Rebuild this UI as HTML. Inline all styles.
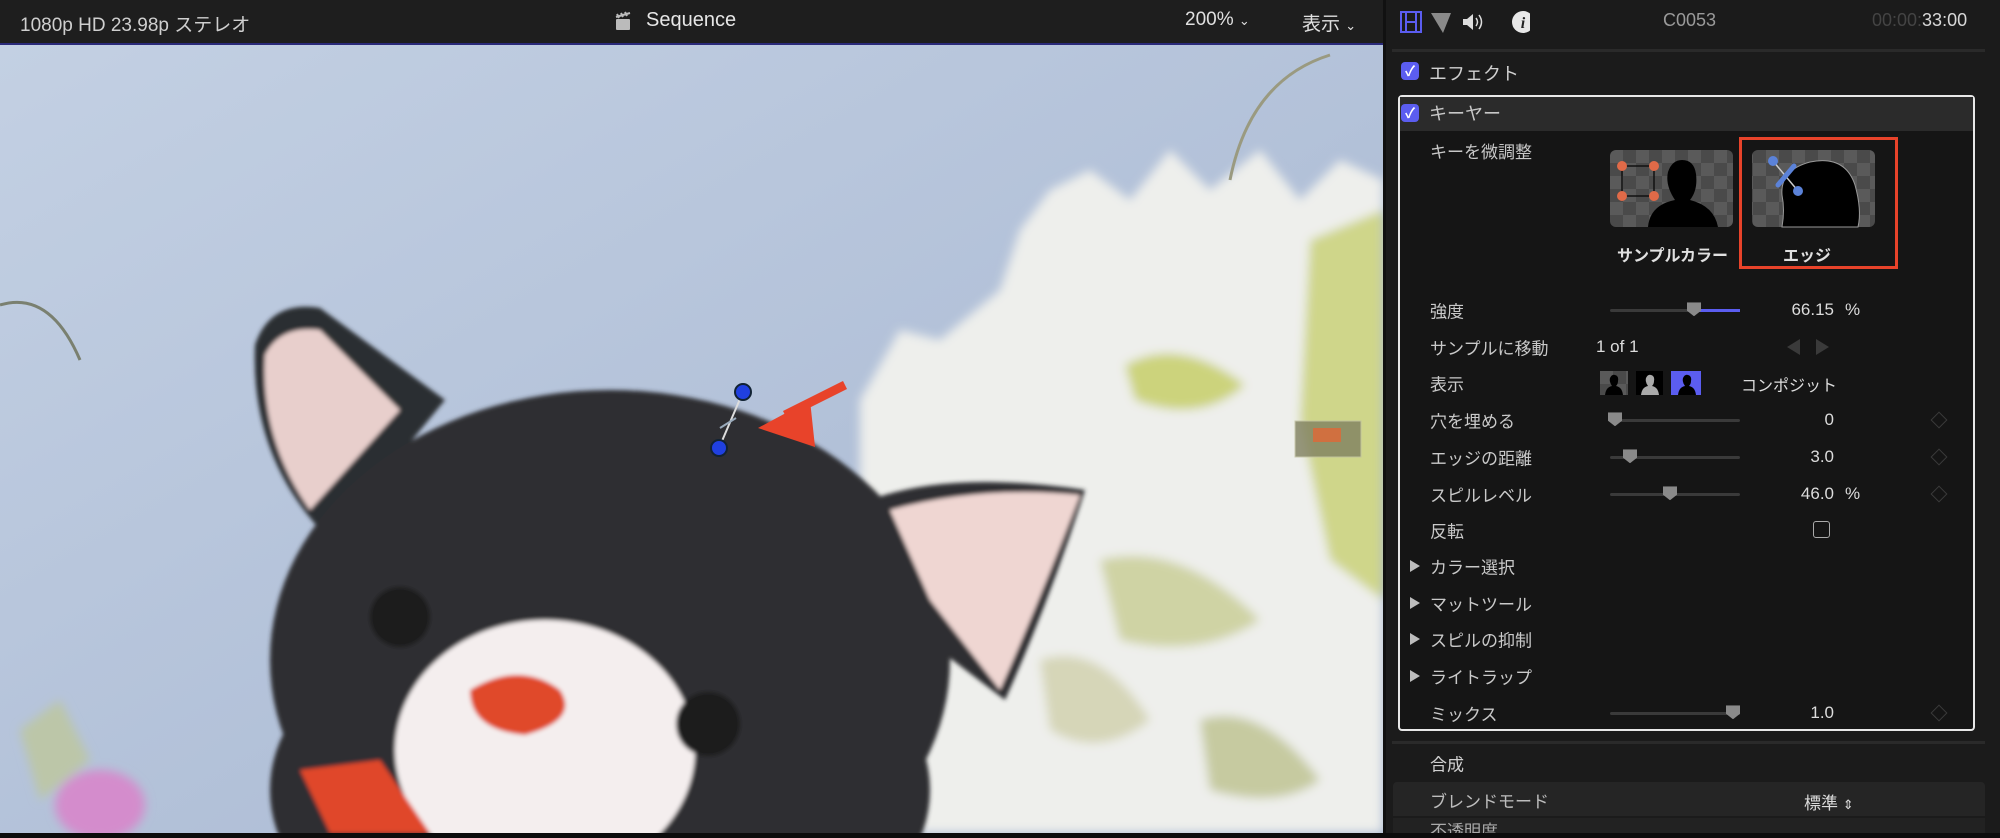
<!DOCTYPE html>
<html><head><meta charset="utf-8"><style>
*{margin:0;padding:0;box-sizing:border-box}
html,body{width:2000px;height:838px;overflow:hidden}
body{background:#1b1b1b;position:relative;font-family:"Liberation Sans","Noto Sans CJK JP",sans-serif;color:#cfcfcf}
.a{position:absolute;white-space:nowrap}
.lbl{position:absolute;left:1430px;font-size:17px;color:#c9c9c9;transform:translateY(-50%);white-space:nowrap}
.val{position:absolute;font-size:17px;color:#dcdcdc;transform:translateY(-50%);text-align:right;white-space:nowrap}
.tri{position:absolute;left:1410px;width:0;height:0;border-left:10px solid #bdbdbd;border-top:6px solid transparent;border-bottom:6px solid transparent;transform:translateY(-50%)}
.sl{position:absolute;left:1610px;width:130px;height:3px;background:#3a3a3a;border-radius:2px}
.th{position:absolute;width:14px;height:14px;background:#8a8a8a;clip-path:polygon(0 0,100% 0,100% 60%,50% 100%,0 60%);transform:translate(-50%,-55%)}
.dia{position:absolute;left:1933px;width:12px;height:12px;border:1.5px solid #3a3a3a;transform:translateY(-50%) rotate(45deg)}
.cb{position:absolute;width:18px;height:18px;background:#5b5df0;border-radius:4px;color:#fff;font-size:14px;line-height:18px;text-align:center;font-weight:bold}
</style></head><body>
<div class="a" style="left:0;top:0;width:1383px;height:44px;background:#1e1e1e"></div>
<div class="a" style="left:20px;top:10px;font-size:19px;color:#cfcfcf">1080p HD 23.98p ステレオ</div>
<div class="a" style="left:613px;top:11px;width:20px;height:20px">
<svg width="20" height="20"><rect x="3" y="8" width="14" height="11" rx="1" fill="#bbb"/><path d="M3 6 L17 2 M4 3 L6 7 M8 2 L10 6 M12 1 L14 5" stroke="#bbb" stroke-width="2"/></svg></div>
<div class="a" style="left:646px;top:9px;font-size:20px;color:#e6e6e6">Sequence</div>
<div class="a" style="left:1185px;top:9px;font-size:19px;color:#e0e0e0">200% <span style="font-size:13px">&#8964;</span></div>
<div class="a" style="left:1302px;top:9px;font-size:19px;color:#e0e0e0">表示 <span style="font-size:13px">&#8964;</span></div>
<div class="a" style="left:0;top:43px;width:1383px;height:2px;background:#2a2a7a"></div>
<svg class="a" style="left:0;top:45px" width="1383" height="788" viewBox="0 45 1383 788">
<defs>
<linearGradient id="sky" x1="0" y1="0" x2="1" y2="1"><stop offset="0" stop-color="#c3d0e3"/><stop offset="1" stop-color="#a5b5d0"/></linearGradient>
<filter id="bl"><feGaussianBlur stdDeviation="5"/></filter>
<filter id="bl2"><feGaussianBlur stdDeviation="2"/></filter>
</defs>
<rect x="0" y="45" width="1383" height="788" fill="url(#sky)"/>
<g filter="url(#bl)">
<path d="M860 833 L860 400 L900 330 L940 340 L1000 290 L1020 230 L1050 190 L1090 170 L1130 200 L1170 150 L1210 190 L1260 150 L1300 200 L1340 160 L1383 180 L1383 833Z" fill="#eeefec"/>
<path d="M1310 240 L1383 210 L1383 600 L1330 560 L1300 420Z" fill="#cfd68a"/>
<path d="M1125 365 Q1180 335 1245 385 Q1200 425 1135 400Z" fill="#ccd37c"/>
<path d="M1100 560 Q1180 540 1260 620 Q1200 660 1120 640Z" fill="#cfd3a4"/>
<path d="M1040 660 Q1100 640 1150 720 Q1100 760 1050 730Z" fill="#d6d6b8"/>
<path d="M1200 720 Q1260 700 1320 780 Q1280 810 1210 790Z" fill="#c6caa0"/>
<ellipse cx="100" cy="805" rx="45" ry="35" fill="#d48ccc"/>
<path d="M20 730 L60 700 L90 760 L40 800Z" fill="#bcc6a8"/>
</g>
<path d="M0 305 Q50 290 80 360" stroke="#7a8070" stroke-width="3" fill="none"/>
<path d="M1230 180 Q1250 80 1330 55" stroke="#9a9a80" stroke-width="3" fill="none"/>
<g filter="url(#bl2)">
<path d="M255 345 Q270 300 320 308 L445 400 L330 540 Q250 460 255 345Z" fill="#2c2d31"/>
<path d="M265 355 Q280 325 320 330 L400 410 L310 510 Q260 440 265 355Z" fill="#e8cfcc"/>
<ellipse cx="610" cy="660" rx="340" ry="270" fill="#2e2f33"/>
<ellipse cx="600" cy="790" rx="330" ry="200" fill="#2e2f33"/>
<path d="M870 500 Q950 470 1085 490 Q1050 600 1005 700 L900 620Z" fill="#2e2f33"/>
<path d="M890 510 Q980 485 1080 495 Q1040 600 1000 690 L930 600Z" fill="#efd6d2"/>
<ellipse cx="545" cy="750" rx="150" ry="130" fill="#f4eeee"/>
<path d="M470 690 Q520 660 560 690 Q580 720 525 735 Q470 730 470 690Z" fill="#e04a2c"/>
<circle cx="400" cy="617" r="30" fill="#1a1a1c"/><circle cx="708" cy="724" r="32" fill="#1a1a1c"/>
<path d="M300 770 L380 760 L430 833 L330 833Z" fill="#e0462a"/>
</g>
<rect x="1295" y="421" width="66" height="36" fill="#808060" opacity=".8" stroke="#c0c0a0"/>
<rect x="1313" y="428" width="28" height="14" fill="#d07040"/>
<line x1="743" y1="392" x2="719" y2="448" stroke="#ddd" stroke-width="2"/>
<line x1="720" y1="428" x2="736" y2="418" stroke="#9ab" stroke-width="2"/>
<circle cx="743" cy="392" r="8" fill="#2040e0" stroke="#123" stroke-width="2"/>
<circle cx="719" cy="448" r="8" fill="#2040e0" stroke="#123" stroke-width="2"/>
<path d="M845 385 L785 415" stroke="#e8432a" stroke-width="9"/>
<path d="M758 428 L810 400 L815 447Z" fill="#e8432a"/>
</svg>
<div class="a" style="left:1383px;top:0;width:3px;height:838px;background:#111"></div>
<svg class="a" style="left:1400px;top:10px" width="130" height="24">
<rect x="1" y="2" width="20" height="20" fill="none" stroke="#5b5df0" stroke-width="2"/><path d="M6 2v20M16 2v20M6 12h10" stroke="#5b5df0" stroke-width="2"/>
<path d="M31 3 L51 3 L43 23Z" fill="#8a8a8a"/>
<path d="M63 9h4l6-5v16l-6-5h-4z" fill="#ddd"/><path d="M76 8q3 4 0 8M79 5q5 7 0 14" stroke="#ddd" stroke-width="1.5" fill="none"/>
<circle cx="123" cy="12" r="11" fill="#e8e8e8"/><text x="123" y="18" font-size="16" font-style="italic" font-weight="bold" text-anchor="middle" fill="#222" font-family="Liberation Serif">i</text>
</svg>
<div class="a" style="left:1663px;top:10px;font-size:18px;color:#9a9a9a">C0053</div>
<div class="a" style="left:1872px;top:10px;font-size:18px;color:#444">00:00:<span style="color:#d8d8d8">33:00</span></div>
<div class="a" style="left:1392px;top:49px;width:593px;height:3px;background:#2a2a2a"></div>
<div class="cb" style="left:1401px;top:62px">✓</div>
<div class="a" style="left:1429px;top:60px;font-size:18px;color:#d0d0d0">エフェクト</div>
<div class="a" style="left:1398px;top:95px;width:577px;height:636px;border:2px solid #e8e8e8;border-radius:4px;background:#151515"></div>
<div class="a" style="left:1400px;top:97px;width:573px;height:34px;background:#2b2b2b"></div>
<div class="cb" style="left:1401px;top:104px">✓</div>
<div class="a" style="left:1429px;top:100px;font-size:18px;color:#c8c8c8">キーヤー</div>
<div class="a" style="left:1430px;top:138px;font-size:17px;color:#c8c8c8">キーを微調整</div>
<svg class="a" style="left:1610px;top:150px" width="265" height="78">
<defs><pattern id="ck" width="26" height="26" patternUnits="userSpaceOnUse"><rect width="26" height="26" fill="#4a4a4a"/><rect width="13" height="13" fill="#5a5a5a"/><rect x="13" y="13" width="13" height="13" fill="#5a5a5a"/></pattern></defs>
<rect x="0" y="0" width="123" height="77" rx="6" fill="url(#ck)"/>
<path d="M38 77 Q40 55 65 50 Q55 35 58 22 Q62 10 72 10 Q84 10 86 24 Q88 40 80 50 Q104 56 108 77Z" fill="#000"/>
<rect x="12" y="16" width="32" height="30" fill="none" stroke="#111" stroke-width="1.5"/>
<circle cx="12" cy="16" r="5" fill="#e06a48"/><circle cx="44" cy="16" r="5" fill="#e06a48"/><circle cx="12" cy="46" r="5" fill="#e06a48"/><circle cx="44" cy="46" r="5" fill="#e06a48"/>
<rect x="142" y="0" width="123" height="77" rx="6" fill="url(#ck)"/>
<path d="M172 77 Q175 60 172 45 Q170 20 200 12 Q235 5 245 35 Q252 60 248 77Z" fill="#000" stroke="#999" stroke-width="1"/>
<line x1="163" y1="11" x2="188" y2="41" stroke="#ccc" stroke-width="1.5"/>
<line x1="168" y1="35" x2="184" y2="16" stroke="#5b82d8" stroke-width="5" stroke-linecap="round"/>
<circle cx="163" cy="11" r="5" fill="#5b82d8"/><circle cx="188" cy="41" r="5" fill="#5b82d8"/>
</svg>
<div class="a" style="left:1739px;top:137px;width:159px;height:132px;border:3px solid #e8432a"></div>
<div class="a" style="left:1617px;top:242px;font-size:16px;color:#e0e0e0;font-weight:bold">サンプルカラー</div>
<div class="a" style="left:1783px;top:242px;font-size:16px;color:#e0e0e0;font-weight:bold">エッジ</div>
<div class="lbl" style="top:310px">強度</div>
<div class="sl" style="top:309px"></div><div class="a" style="left:1694px;top:309px;width:46px;height:3px;background:#5b5df0"></div><div class="th" style="left:1694px;top:310px"></div>
<div class="val" style="left:1740px;width:94px;top:310px">66.15</div><div class="val" style="left:1845px;top:310px">%</div>
<div class="lbl" style="top:347px">サンプルに移動</div>
<div class="a" style="left:1596px;top:337px;font-size:17px;color:#dcdcdc">1 of 1</div>
<div class="a" style="left:1787px;top:339px;border-right:13px solid #3a3a3a;border-top:8px solid transparent;border-bottom:8px solid transparent"></div>
<div class="a" style="left:1816px;top:339px;border-left:13px solid #3a3a3a;border-top:8px solid transparent;border-bottom:8px solid transparent"></div>
<div class="lbl" style="top:383px">表示</div>
<svg class="a" style="left:1600px;top:371px" width="120" height="25">
<rect x="0" y="0" width="28" height="24" fill="url(#ck)"/><rect x="36" y="0" width="27" height="24" fill="#000"/><rect x="71" y="0" width="30" height="24" fill="#5b5df0"/>
<path d="M5 24 Q6 16 12 15 Q9 11 10 7 Q12 3 15 4 Q19 5 18 10 Q18 13 16 15 Q22 16 23 24Z" fill="#000"/>
<path d="M41 24 Q42 16 48 15 Q45 11 46 7 Q48 3 51 4 Q55 5 54 10 Q54 13 52 15 Q58 16 59 24Z" fill="#aaa"/>
<path d="M78 24 Q79 16 85 15 Q82 11 83 7 Q85 3 88 4 Q92 5 91 10 Q91 13 89 15 Q95 16 96 24Z" fill="#000"/>
</svg>
<div class="a" style="left:1741px;top:372px;font-size:16px;color:#dcdcdc">コンポジット</div>
<div class="lbl" style="top:420px">穴を埋める</div>
<div class="sl" style="top:419px"></div><div class="th" style="left:1615px;top:420px"></div>
<div class="val" style="left:1740px;width:94px;top:420px">0</div><div class="dia" style="top:420px"></div>
<div class="lbl" style="top:457px">エッジの距離</div>
<div class="sl" style="top:456px"></div><div class="th" style="left:1630px;top:457px"></div>
<div class="val" style="left:1740px;width:94px;top:457px">3.0</div><div class="dia" style="top:457px"></div>
<div class="lbl" style="top:494px">スピルレベル</div>
<div class="sl" style="top:493px"></div><div class="th" style="left:1670px;top:494px"></div>
<div class="val" style="left:1740px;width:94px;top:494px">46.0</div><div class="val" style="left:1845px;top:494px">%</div><div class="dia" style="top:494px"></div>
<div class="lbl" style="top:530px">反転</div>
<div class="a" style="left:1813px;top:521px;width:17px;height:17px;border:1.5px solid #aaa;border-radius:3px"></div>
<div class="tri" style="top:566px"></div><div class="lbl" style="top:566px">カラー選択</div>
<div class="tri" style="top:603px"></div><div class="lbl" style="top:603px">マットツール</div>
<div class="tri" style="top:639px"></div><div class="lbl" style="top:639px">スピルの抑制</div>
<div class="tri" style="top:676px"></div><div class="lbl" style="top:676px">ライトラップ</div>
<div class="lbl" style="top:713px">ミックス</div>
<div class="sl" style="top:712px"></div><div class="th" style="left:1733px;top:713px"></div>
<div class="val" style="left:1740px;width:94px;top:713px">1.0</div><div class="dia" style="top:713px"></div>
<div class="a" style="left:1392px;top:741px;width:593px;height:3px;background:#2a2a2a"></div>
<div class="lbl" style="top:763px;color:#d0d0d0">合成</div>
<div class="a" style="left:1393px;top:782px;width:592px;height:34px;background:#252525;border-radius:4px 4px 0 0"></div>
<div class="lbl" style="top:800px;color:#bdbdbd">ブレンドモード</div>
<div class="a" style="left:1804px;top:789px;font-size:17px;color:#dcdcdc">標準 <span style="font-size:13px">&#8661;</span></div>
<div class="a" style="left:1393px;top:818px;width:592px;height:15px;background:#222;overflow:hidden"><div style="position:absolute;left:37px;top:5px;font-size:17px;color:#aaa;line-height:17px">不透明度</div></div>
<div class="a" style="left:0;top:833px;width:2000px;height:5px;background:#0c0c0c"></div>
</body></html>
